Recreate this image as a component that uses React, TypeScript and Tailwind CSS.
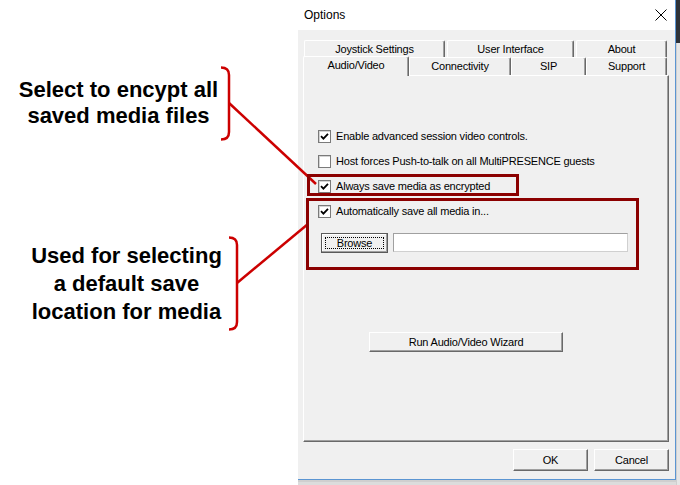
import React from "react";

const ui = { fontFamily: '"Liberation Sans", Arial, sans-serif' };

function Check({ on }: { on?: boolean }) {
  return (
    <span className="w-[13px] h-[13px] bg-white border border-[#7a7a7a] shadow-[inset_1px_1px_0_#d4d4d4] flex items-center justify-center shrink-0">
      {on && (
        <svg width="9" height="9" viewBox="0 0 9 9">
          <path d="M1 4.2 L3.4 6.6 L8 1.8" stroke="#000" strokeWidth="1.8" fill="none" />
        </svg>
      )}
    </span>
  );
}

function Row({ on, label }: { on?: boolean; label: string }) {
  return (
    <div className="h-[25px] flex items-center pl-[14px]">
      <Check on={on} />
      <span className="ml-[5px] text-[11px] text-black leading-none">{label}</span>
    </div>
  );
}

const btn =
  "bg-[#f0f0f0] border-t border-l border-white border-r border-b border-r-[#696969] border-b-[#696969] shadow-[inset_-1px_-1px_0_#a0a0a0] text-[11px] text-black flex items-center justify-center leading-none";

const tab =
  "h-[17px] bg-[#f0f0f0] border-t border-l border-white border-r border-r-[#696969] shadow-[inset_-1px_0_0_#a0a0a0] rounded-t-[2px] flex items-center justify-center text-[11px] text-black leading-none";

export default function App() {
  return (
    <div className="relative w-[680px] h-[485px] overflow-hidden bg-white flex" style={ui}>
      {/* annotations */}
      <div className="w-[298px] shrink-0 bg-white flex flex-col font-bold text-[22px] text-black">
        <div className="mt-[77px] w-[237px] text-center leading-[26px]">
          Select to encypt all
          <br />
          saved media files
        </div>
        <div className="mt-[113px] w-[253px] text-center leading-[28px]">
          Used for selecting
          <br />
          a default save
          <br />
          location for media
        </div>
      </div>

      {/* dialog */}
      <div className="w-[378px] shrink-0 flex flex-col tracking-[-0.2px]">
        <div className="h-[480px] flex flex-col border-r border-b border-[#5b95d2]">
          <div className="h-[30px] bg-white flex items-center justify-between pl-[6px] pr-[8px]">
            <span className="text-[12px] text-black tracking-normal">Options</span>
            <svg width="12" height="12" viewBox="0 0 12 12">
              <path d="M0.5 0.5 L11.5 11.5 M11.5 0.5 L0.5 11.5" stroke="#000" strokeWidth="1" />
            </svg>
          </div>
          <div className="flex-1 bg-[#f0f0f0] pt-[10px] pl-[5px] pr-[6px] flex flex-col">
            <div className="flex gap-[2px] ml-[1px]">
              <div className={`${tab} w-[141px]`}>Joystick Settings</div>
              <div className={`${tab} w-[127px]`}>User Interface</div>
              <div className={`${tab} w-[91px]`}>About</div>
            </div>
            <div className="flex relative z-10">
              <div className="w-[106px] h-[20px] -mt-[1px] bg-[#f0f0f0] border-t border-l border-white border-r border-r-[#696969] shadow-[inset_-1px_0_0_#a0a0a0] rounded-t-[2px] flex items-start justify-center pt-[3px] text-[11px] leading-none text-black">
                Audio/Video
              </div>
              <div className={`${tab} h-[18px] w-[102px]`}>Connectivity</div>
              <div className={`${tab} h-[18px] w-[75px]`}>SIP</div>
              <div className={`${tab} h-[18px] w-[81px]`}>Support</div>
            </div>
            <div className="h-[367px] -mt-[1px] border-t border-l border-white border-r border-b border-r-[#696969] border-b-[#696969] shadow-[inset_-1px_-1px_0_#a0a0a0] flex flex-col pt-[48px]">
              <Row on label="Enable advanced session video controls." />
              <Row label="Host forces Push-to-talk on all MultiPRESENCE guests" />
              <Row on label="Always save media as encrypted" />
              <Row on label="Automatically save all media in..." />
              <div className="flex items-start mt-[9px] ml-[17px] gap-[5px]">
                <div className="w-[67px] h-[20px] bg-[#f0f0f0] border border-[#5a5a5a] shadow-[inset_-1px_-1px_0_#a0a0a0,inset_1px_1px_0_#fff] p-[3px] flex">
                  <span className="flex-1 border border-dotted border-black flex items-center justify-center text-[11px] leading-none text-black">
                    Browse
                  </span>
                </div>
                <div className="w-[235px] h-[19px] bg-white border border-[#d0d0d0] border-t-[#a0a0a0] border-l-[#a0a0a0]" />
              </div>
              <div className={`${btn} w-[194px] h-[20px] mt-[79px] ml-[65px]`}>Run Audio/Video Wizard</div>
            </div>
            <div className="flex justify-end gap-[6px] mt-[7px]">
              <div className={`${btn} w-[75px] h-[22px]`}>OK</div>
              <div className={`${btn} w-[75px] h-[22px]`}>Cancel</div>
            </div>
          </div>
        </div>
        <div className="flex-1 bg-[#dcdcdc] border-t-2 border-[#cfcfcf]" />
      </div>

      {/* window edge behind */}
      <div className="flex-1 flex flex-col">
        <div className="h-[43px] bg-[#2e3238]" />
        <div className="flex-1 bg-[#e6e6e6] border-l border-[#cfcfcf]" />
      </div>

      {/* callout overlay */}
      <svg className="absolute inset-0 pointer-events-none" width="680" height="485" viewBox="0 0 680 485">
        <g stroke="#cc0000" strokeWidth="2.5" fill="none">
          <path d="M221 67.5 Q229 67.5 229 75 L229 132 Q229 139.5 221 139.5" />
          <path d="M229 103 L316 184" />
          <path d="M229 237.5 Q237 237.5 237 245 L237 322 Q237 329.5 229 329.5" />
          <path d="M237 283 L308 224" />
        </g>
        <g stroke="#8b0000" strokeWidth="3" fill="none">
          <rect x="308.5" y="175.5" width="209" height="19" />
          <rect x="307.5" y="199.5" width="330" height="69" />
        </g>
      </svg>
    </div>
  );
}
